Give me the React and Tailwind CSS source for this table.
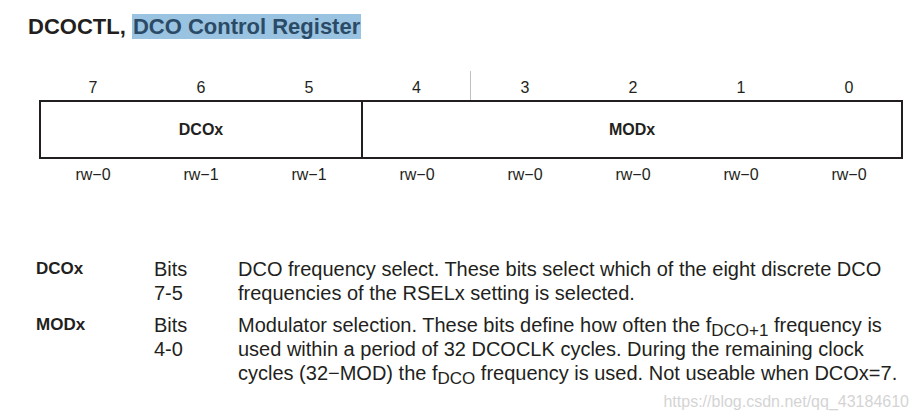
const bits = ["7", "6", "5", "4", "3", "2", "1", "0"];
const access = ["rw−0", "rw−1", "rw−1", "rw−0", "rw−0", "rw−0", "rw−0", "rw−0"];

const Sub = ({ children }) => (
  <span className="relative top-[4px] text-[17px] leading-none">{children}</span>
);

export default function App() {
  return (
    <div
      className="w-[919px] h-[420px] bg-white text-[#231f20] overflow-hidden"
      style={{ fontFamily: '"Liberation Sans", Arial, sans-serif' }}
    >
      {/* title */}
      <div className="pt-[13px] pl-[28px]">
        <h1 className="text-[22px] leading-[27px] font-bold">
          DCOCTL,{" "}
          <span className="bg-[#99c3e0] text-[#2b4a66] px-[1px]">
            DCO Control Register
          </span>
        </h1>
      </div>

      {/* register diagram */}
      <div className="ml-[39px] w-[864px] mt-[31px]">
        <div className="grid grid-cols-8 h-[29px]">
          {bits.map((b, i) => (
            <div
              key={b}
              className={
                "flex items-end justify-center text-[16px] leading-[24px]" +
                (i === 3 ? " border-r border-[#c0c0c0]" : "")
              }
            >
              {b}
            </div>
          ))}
        </div>
        <div className="flex h-[59px] border-2 border-[#231f20]">
          <div className="w-[322px] border-r-2 border-[#231f20] flex items-center justify-center text-[16px] font-bold">
            DCOx
          </div>
          <div className="flex-1 flex items-center justify-center text-[16px] font-bold">
            MODx
          </div>
        </div>
        <div className="grid grid-cols-8">
          {access.map((a, i) => (
            <div key={i} className="text-center text-[16px] leading-[32px]">
              {a}
            </div>
          ))}
        </div>
      </div>

      {/* field descriptions */}
      <div className="mt-[66px] pl-[36px] grid grid-cols-[118px_84px_1fr] gap-y-[8px] text-[20px] leading-[24px]">
        <div className="font-bold text-[17px]">DCOx</div>
        <div>
          Bits
          <br />
          7-5
        </div>
        <div>
          DCO frequency select. These bits select which of the eight discrete DCO
          <br />
          frequencies of the RSELx setting is selected.
        </div>

        <div className="font-bold text-[17px]">MODx</div>
        <div>
          Bits
          <br />
          4-0
        </div>
        <div>
          Modulator selection. These bits define how often the f<Sub>DCO+1</Sub> frequency is
          <br />
          used within a period of 32 DCOCLK cycles. During the remaining clock
          <br />
          cycles (32−MOD) the f<Sub>DCO</Sub> frequency is used. Not useable when DCOx=7.
        </div>
      </div>

      <div className="mt-[5px] pr-[10px] text-right text-[16px] leading-[24px] text-[#d4d4d4]">
        https://blog.csdn.net/qq_43184610
      </div>
    </div>
  );
}
